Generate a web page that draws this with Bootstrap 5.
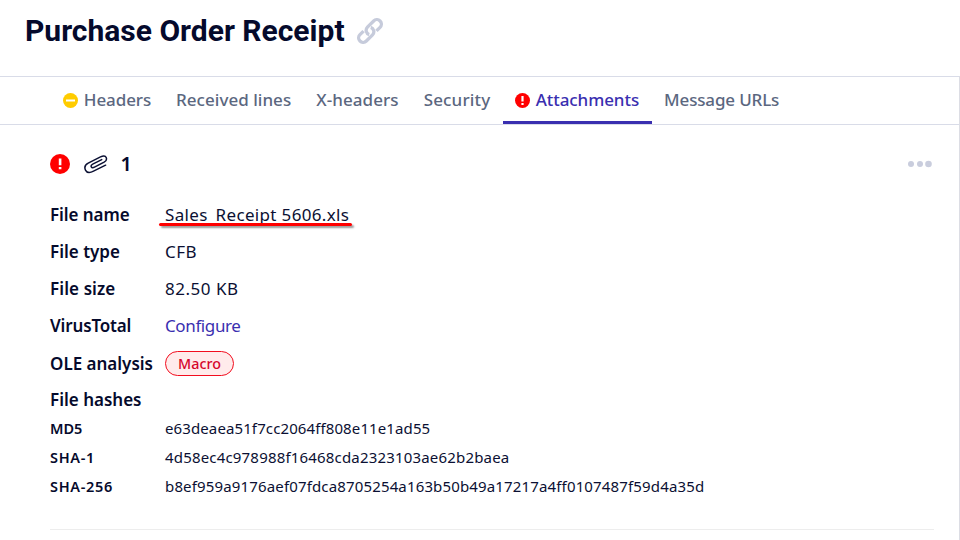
<!DOCTYPE html>
<html lang="en">
<head>
<meta charset="utf-8">
<meta name="viewport" content="width=device-width, initial-scale=1">
<title>Purchase Order Receipt</title>
<link href="https://cdn.jsdelivr.net/npm/bootstrap@5.3.0/dist/css/bootstrap.min.css" rel="stylesheet">
<style>
  body { font-family: "Noto Sans", "Liberation Sans", sans-serif; color: #050a2c; background: #fff; font-size: 17px; line-height: 24px; height: 540px; overflow: hidden; }
  .page-head { height: 76px; padding: 0 0 15px 25px; gap: 12px; }
  .page-title { font: 700 30px/36px Roboto, "Liberation Sans", sans-serif; color: #050a2c; }
  .panel { height: 464px; border-top: 1px solid #d9dce8; border-right: 1px solid #dcdde4; }
  .tabs { height: 48px; padding-left: 50.8px; border-bottom: 1px solid #d9dce8; }
  .tabs .nav-link { height: 47px; padding: 2px 12.5px 0; gap: 5.5px; color: #5b677f; font-weight: 500; border-bottom: 3px solid transparent; white-space: nowrap; line-height: 42px; }
  .tabs .nav-link.active { color: #3a2fb0; border-bottom-color: #3a2fb0; }
  .sect { margin: 0 25px 0 50px; height: 405px; border-bottom: 1px solid #ededed; }
  .sect-head { height: 71px; padding-top: 7px; }
  .clip { margin-left: 14px; }
  .count { font-weight: 600; font-size: 20px; margin-left: 12.5px; }
  .field { height: 37px; }
  .field-name { width: 115px; flex: none; font-weight: 600; white-space: nowrap; }
  .field-value { white-space: nowrap; color: #0b1033; }
  .hashes { margin-top: -1px; }
  .hash { height: 28.7px; font-size: 15px; }
  .hash .field-name { font-size: 14.5px; }
  .marked { position: relative; }
  .marked::after { content: ""; position: absolute; left: -6px; right: -3px; top: 20px; height: 3px; border-radius: 2px; background: #f00; box-shadow: 2px 2px 2px rgba(0,0,0,.4); }
  .low { position: relative; top: 2px; }
  .macro-tag { height: 25px; width: 69px; border: 1px solid #f20d1e; border-radius: 13px; background: #ffebeb; color: #d6072b; font-size: 14.3px; font-weight: 500; line-height: 24px; }
  .cfg { color: #3a2fb0; letter-spacing: -.38px; }
</style>
<script src="https://cdn.jsdelivr.net/npm/bootstrap@5.3.0/dist/js/bootstrap.bundle.min.js"></script>
</head>
<body>
<header class="page-head d-flex align-items-center">
  <h1 class="page-title m-0">Purchase Order Receipt</h1>
  <svg width="26" height="26" viewBox="0 0 26 26" fill="none" stroke="#c6cbdb" stroke-width="3.3">
    <g transform="translate(13 13) rotate(-45)">
      <path d="M4.6 4.5H9.7a4.5 4.5 0 0 0 0-9H.9a4.5 4.5 0 0 0-4 6.5"/>
      <path d="M-4.6-4.5H-9.7a4.5 4.5 0 0 0 0 9H-.9a4.5 4.5 0 0 0 4-6.5"/>
    </g>
  </svg>
</header>
<main class="panel">
  <nav class="tabs nav flex-nowrap">
    <a class="nav-link d-flex align-items-center" href="#" style="letter-spacing:-.1px">
      <svg width="15" height="15" viewBox="0 0 15 15"><circle cx="7.5" cy="7.5" r="7.5" fill="#fc0"/><rect x="3" y="6.5" width="9" height="2" fill="#fff"/></svg>
      Headers</a>
    <a class="nav-link" href="#" style="letter-spacing:.03px">Received lines</a>
    <a class="nav-link" href="#" style="letter-spacing:.08px">X-headers</a>
    <a class="nav-link" href="#" style="letter-spacing:.15px">Security</a>
    <a class="nav-link active d-flex align-items-center" href="#" style="letter-spacing:-.08px">
      <svg width="15" height="15" viewBox="0 0 15 15"><circle cx="7.5" cy="7.5" r="7.5" fill="#f00"/><path d="M6.4 3h2.2v5.6H6.4zM6.4 10h2.2v2H6.4z" fill="#fff"/></svg>
      Attachments</a>
    <a class="nav-link" href="#" style="letter-spacing:-.15px">Message URLs</a>
  </nav>
  <section class="sect">
    <div class="sect-head d-flex align-items-center">
      <svg width="20" height="20" viewBox="0 0 20 20"><circle cx="10" cy="10" r="10" fill="#f00"/><path d="M8.8 4.6h2.6v6.6H8.8zM8.8 12.9h2.6v2.4H8.8z" fill="#fff"/></svg>
      <svg class="clip" width="24" height="20" viewBox="0 0 24 20" fill="none" stroke="#0b1033" stroke-width="1.5" stroke-linecap="round" stroke-linejoin="round">
        <path d="M21.6 11.2L9.5 17.2C6.5 18.8 3.2 19.3 1.6 16.3C0 13.2 1.4 10.7 4.2 9.2L16.5 2.9C19 1.6 21.3 1.4 22.2 3.5C23 5.5 22.1 7.1 20.1 8.2L10.5 13.2C9.2 13.9 7.9 14.1 7.3 12.9C6.7 11.7 7.5 10.8 8.7 10.2L17.7 5.6"/>
      </svg>
      <span class="count">1</span>
      <svg class="ms-auto" width="26" height="8" viewBox="0 0 26 8" fill="#c9cddd"><circle cx="3" cy="4" r="3"/><circle cx="12" cy="4" r="3"/><circle cx="20.5" cy="4" r="3.3"/></svg>
    </div>
    <div class="field d-flex align-items-center"><div class="field-name" style="letter-spacing:-.07px">File name</div><div class="field-value marked" style="letter-spacing:.34px">Sales<span class="low">_</span>Receipt 5606.xls</div></div>
    <div class="field d-flex align-items-center"><div class="field-name">File type</div><div class="field-value" style="letter-spacing:.5px">CFB</div></div>
    <div class="field d-flex align-items-center"><div class="field-name" style="letter-spacing:.1px">File size</div><div class="field-value" style="letter-spacing:.52px">82.50 KB</div></div>
    <div class="field d-flex align-items-center"><div class="field-name" style="letter-spacing:-.15px">VirusTotal</div><div class="field-value"><a class="cfg text-decoration-none" href="#">Configure</a></div></div>
    <div class="field d-flex align-items-center" style="height:39px"><div class="field-name">OLE analysis</div><span class="macro-tag text-center">Macro</span></div>
    <div class="field d-flex align-items-center" style="height:34px"><div class="field-name">File hashes</div></div>
    <div class="hashes">
      <div class="field hash d-flex align-items-center" style="height:24px"><div class="field-name">MD5</div><div class="field-value" style="letter-spacing:.11px">e63deaea51f7cc2064ff808e11e1ad55</div></div>
      <div class="field hash d-flex align-items-center" style="height:33px"><div class="field-name" style="letter-spacing:.7px">SHA-1</div><div class="field-value" style="letter-spacing:.18px">4d58ec4c978988f16468cda2323103ae62b2baea</div></div>
      <div class="field hash d-flex align-items-center" style="height:25px"><div class="field-name" style="letter-spacing:.7px">SHA-256</div><div class="field-value" style="letter-spacing:.15px">b8ef959a9176aef07fdca8705254a163b50b49a17217a4ff0107487f59d4a35d</div></div>
    </div>
  </section>
</main>
</body>
</html>
